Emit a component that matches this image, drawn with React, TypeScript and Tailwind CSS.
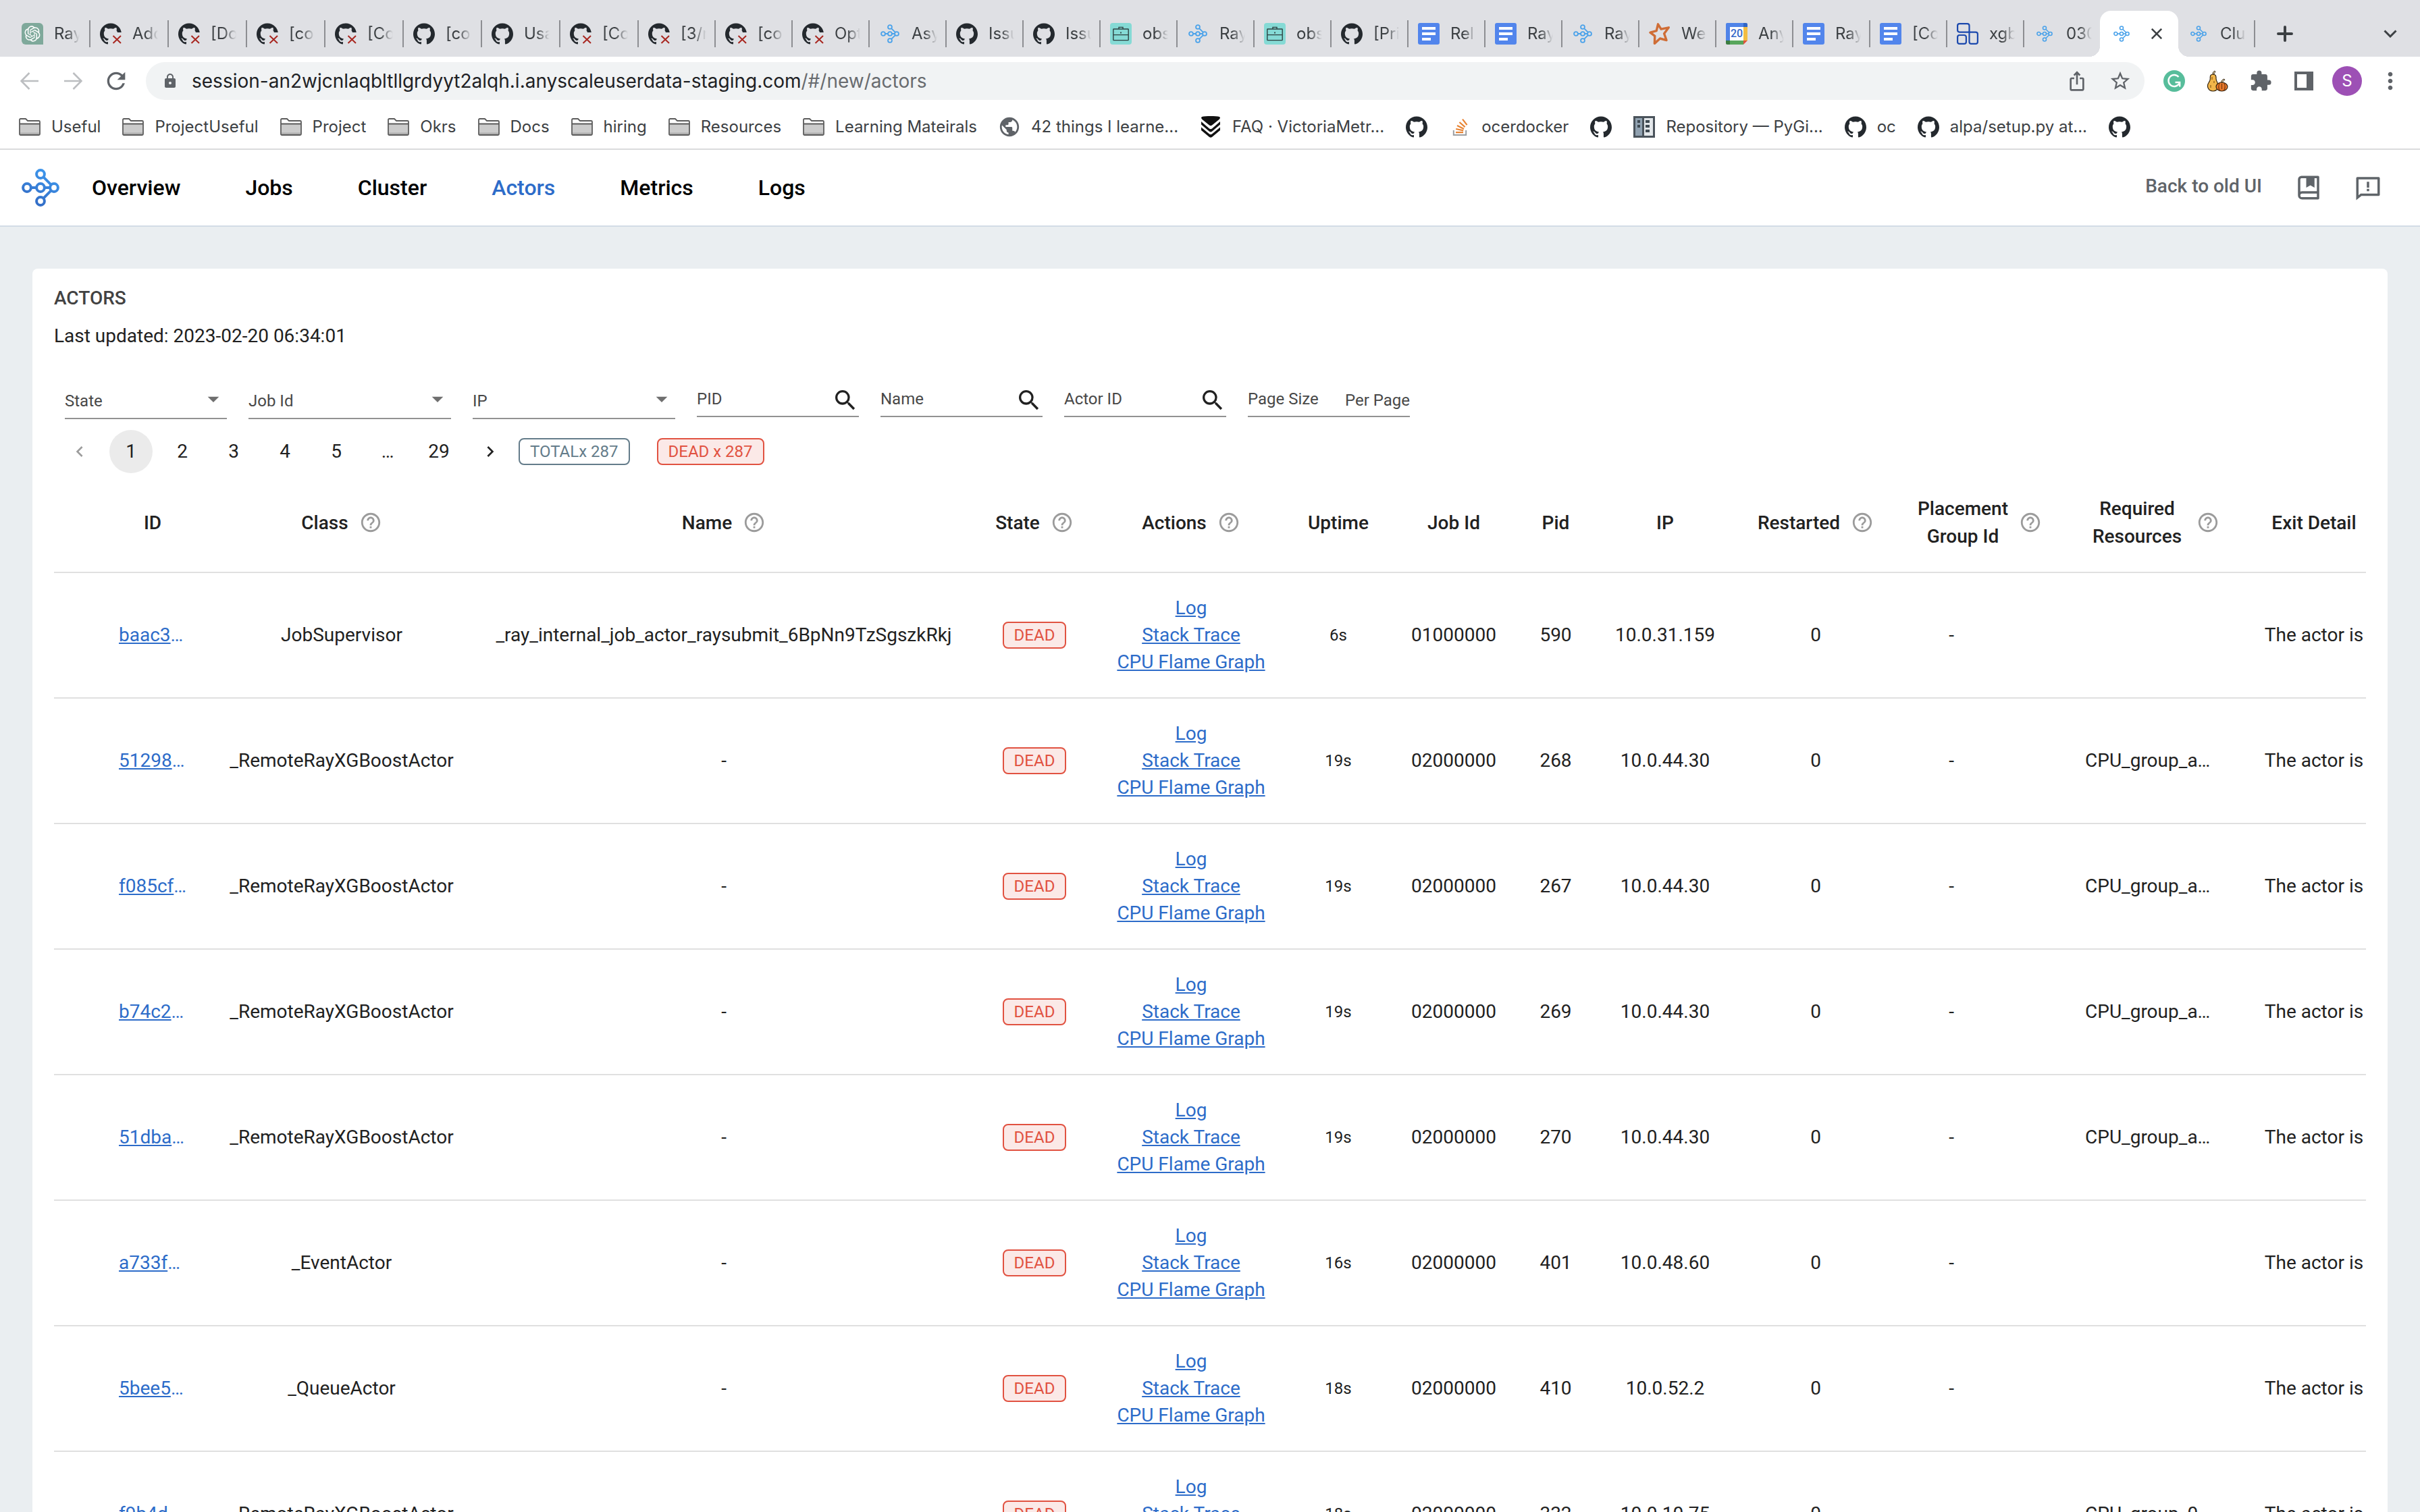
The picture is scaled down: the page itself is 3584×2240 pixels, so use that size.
import type { ReactNode } from "react";
import {
  MdArrowDropDown,
  MdExtension,
  MdHelpOutline,
  MdIosShare,
  MdLock,
  MdMoreVert,
  MdNavigateBefore,
  MdNavigateNext,
  MdPublic,
  MdRefresh,
  MdSearch,
  MdStarBorder,
} from "react-icons/md";
import { RiFeedbackLine, RiOpenaiFill } from "react-icons/ri";

/* ---------- Icons ---------- */

const GITHUB_PATH =
  "M12 .297c-6.63 0-12 5.373-12 12 0 5.303 3.438 9.8 8.205 11.385.6.113.82-.258.82-.577 0-.285-.01-1.04-.015-2.04-3.338.724-4.042-1.61-4.042-1.61C4.422 18.07 3.633 17.7 3.633 17.7c-1.087-.744.084-.729.084-.729 1.205.084 1.838 1.236 1.838 1.236 1.07 1.835 2.809 1.305 3.495.998.108-.776.417-1.305.76-1.605-2.665-.3-5.466-1.332-5.466-5.93 0-1.31.465-2.38 1.235-3.22-.135-.303-.54-1.523.105-3.176 0 0 1.005-.322 3.3 1.23.96-.267 1.98-.399 3-.405 1.02.006 2.04.138 3 .405 2.28-1.552 3.285-1.23 3.285-1.23.645 1.653.24 2.873.12 3.176.765.84 1.23 1.91 1.23 3.22 0 4.61-2.805 5.625-5.475 5.92.42.36.81 1.096.81 2.22 0 1.606-.015 2.896-.015 3.286 0 .315.21.69.825.57C20.565 22.092 24 17.592 24 12.297c0-6.627-5.373-12-12-12";

function GithubIcon() {
  return (
    <svg viewBox="0 0 24 24" className="size-8 shrink-0" fill="#24292e" aria-hidden="true">
      <path d={GITHUB_PATH} />
    </svg>
  );
}

function GithubFailIcon() {
  return (
    <svg viewBox="0 0 32 32" className="size-8 shrink-0" aria-hidden="true">
      <clipPath id="gh-cut">
        <path d="M0 0H32V14H13V32H0Z" />
      </clipPath>
      <g clipPath="url(#gh-cut)">
        <path d={GITHUB_PATH} transform="scale(1.3333)" fill="#24292e" />
      </g>
      <path d="M19.5 19 31 30M31 19 19.5 30" stroke="#a8261f" strokeWidth="2" fill="none" />
    </svg>
  );
}

function RayGlyph({ className, stroke, width }: { className: string; stroke: string; width: number }) {
  return (
    <svg viewBox="0 0 56 56" className={className} fill="none" aria-hidden="true">
      <defs>
        <linearGradient id="ray-grad" gradientUnits="userSpaceOnUse" x1="40" y1="8" x2="20" y2="48">
          <stop offset="0" stopColor="#3d94ea" />
          <stop offset="1" stopColor="#336fc8" />
        </linearGradient>
      </defs>
      <g stroke={stroke} strokeWidth={width}>
        <circle cx="28" cy="8" r="5.9" />
        <circle cx="8" cy="28" r="5.9" />
        <circle cx="28" cy="28" r="5.9" />
        <circle cx="48" cy="28" r="5.9" />
        <circle cx="28" cy="48" r="5.9" />
        <path d="M13.9 28.01H22.1M33.9 28.01H42.1M32.2 12.2 43.8 23.8M32.2 43.8 43.8 32.2" />
      </g>
    </svg>
  );
}

function RayFavicon() {
  return (
    <span className="flex size-8 shrink-0 items-center justify-center">
      <RayGlyph className="size-7" stroke="#4aa2ea" width={3.6} />
    </span>
  );
}

function RaySmallFavicon() {
  return (
    <span className="flex size-8 shrink-0 items-center justify-center">
      <RayGlyph className="size-6" stroke="#4aa2ea" width={3.6} />
    </span>
  );
}

function OpenAiIcon() {
  return (
    <span className="flex size-8 shrink-0 items-center justify-center rounded-l-md rounded-tr-md bg-[#7fa99b] text-white">
      <RiOpenaiFill size={28} />
    </span>
  );
}

function BriefcaseIcon() {
  return (
    <svg viewBox="0 0 32 32" className="size-8 shrink-0" fill="none" aria-hidden="true">
      <rect width="32" height="32" rx="4" fill="#85dad5" />
      <g stroke="#2e4242" strokeWidth="1.4">
        <rect x="4.8" y="9" width="22.4" height="16.6" rx="0.6" />
        <path d="M13 9V6.4H19V9M5 17.6H27" />
        <path d="M16 13.6V15.4" strokeWidth="1.8" />
      </g>
    </svg>
  );
}

function DocsIcon() {
  return (
    <svg viewBox="0 0 32 32" className="size-8 shrink-0" aria-hidden="true">
      <rect width="32" height="32" rx="3" fill="#5285ec" />
      <path d="M6 6H26V10H6ZM6 14H26V18H6ZM6 22H19V26H6Z" fill="#fff" />
    </svg>
  );
}

function StarFavicon() {
  return (
    <svg viewBox="0 0 32 32" className="size-8 shrink-0" fill="none" aria-hidden="true">
      <path
        d="M13.5 1.8 18 9.2 29.3 6.8 22.6 15.8 26 25.6 16.5 23 8.4 30.4 8.8 19.4 2 14.2 11.2 11.6Z"
        stroke="#cf6d36"
        strokeWidth="3.4"
        strokeLinejoin="round"
      />
    </svg>
  );
}

function CalendarIcon() {
  return (
    <span className="relative flex size-8 shrink-0 items-center justify-center">
      <svg viewBox="0 0 32 32" className="absolute inset-0 size-8" aria-hidden="true">
        <path d="M2 0H26V6H6V26H0V2Q0 0 2 0Z" fill="#4f83e8" />
        <path d="M26 0H30Q32 0 32 2V6H26Z" fill="#2f65c6" />
        <path d="M26 6H32V26H26Z" fill="#f3bd42" />
        <path d="M6 26H26V32H6Z" fill="#58a65c" />
        <path d="M0 26H6V32H2Q0 32 0 30Z" fill="#3b7d41" />
        <path d="M26 26H32L26 32Z" fill="#e0533f" />
        <path d="M6 6H26V26H6Z" fill="#fff" />
      </svg>
      <span className="relative font-['Roboto',sans-serif] text-[16px] leading-none font-medium text-[#3568c9]">20</span>
    </span>
  );
}

function BlocksIcon() {
  return (
    <svg viewBox="0 0 32 32" className="size-8 shrink-0" fill="none" aria-hidden="true">
      <g stroke="#1c49ad" strokeWidth="2.2">
        <path d="M4.1 1.1H15.5Q18.5 1.1 18.5 4.1V13.6H4.1Q1.1 13.6 1.1 10.6V4.1Q1.1 1.1 4.1 1.1Z" />
        <rect x="1.1" y="18" width="12.8" height="12.9" rx="3" />
        <path d="M18.5 13.6H27.9Q30.9 13.6 30.9 16.6V27.9Q30.9 30.9 27.9 30.9H21.5Q18.5 30.9 18.5 27.9Z" />
      </g>
    </svg>
  );
}

function FolderIcon() {
  return (
    <svg viewBox="0 0 32 32" className="size-8 shrink-0" aria-hidden="true">
      <path d="M1 27V6Q1 4 3 4H10L13 7H29Q31 7 31 9V27Q31 28 30 28H2Q1 28 1 27Z" fill="#fff" />
      <path d="M2 12H30V27H2Z" fill="#cccccc" />
      <path d="M2 24.5H30V27H2Z" fill="#b0b0b0" />
      <path
        d="M1 26.5V5.5Q1 4 2.5 4H10L13 7H29.5Q31 7 31 8.5V26.5Q31 28 29.5 28H2.5Q1 28 1 26.5ZM1 11.5H31"
        fill="none"
        stroke="#5b5b5b"
        strokeWidth="1.8"
      />
    </svg>
  );
}

function GlobeIcon() {
  return (
    <span className="flex size-8 shrink-0 items-center justify-center text-[#5f6368]">
      <MdPublic size={34} className="shrink-0" />
    </span>
  );
}

function ChevronStackIcon() {
  return (
    <svg viewBox="0 0 32 32" className="size-8 shrink-0" fill="#111111" aria-hidden="true">
      <path d="M3 1C8 -.3 24 -.3 29 1C30.4 2 30 3.500 28.500 5L18 13.600Q16 15 14 13.600L3.500 5C2 3.500 1.600 2 3 1Z" />
      <path d="M2 8 14 18.600Q16 20 18 18.600L30 8V12.600L18 22.800Q16 24.200 14 22.800L2 12.600Z" />
      <path d="M2 16.500 14 26.600Q16 28 18 26.600L30 16.500V21L18 31Q16 32.500 14 31L2 21Z" />
    </svg>
  );
}

function StackOverflowIcon() {
  return (
    <svg viewBox="0 0 32 32" className="size-8 shrink-0" fill="none" aria-hidden="true">
      <path d="M6.800 21V28H25.200V21" stroke="#9b9fa3" strokeWidth="2" />
      <g stroke="#e88434" strokeWidth="2.200">
        <path d="M10 24.200H21M10.200 19 21.200 21.400M12 14 22 19M15.400 9 23.600 16.200M20 4.600 26.600 13.200" />
      </g>
    </svg>
  );
}

function BuildingIcon() {
  return (
    <svg viewBox="0 0 32 32" className="size-8 shrink-0" aria-hidden="true">
      <rect width="32" height="32" fill="#4a535b" />
      <rect x="3" y="3" width="10" height="26" fill="#90a1b0" />
      <rect x="16" y="3" width="13" height="26" fill="#e3e7ea" />
      <path d="M6 6H10V10H6ZM6 13H10V17H6ZM18 6H24V10H18ZM18 13H24V17H18ZM18 20H24V24H18Z" fill="#3f4a52" />
    </svg>
  );
}

function GrammarlyIcon() {
  return (
    <svg viewBox="0 0 32 32" className="size-8" fill="none" aria-hidden="true">
      <circle cx="16" cy="16" r="16" fill="#57bd9b" />
      <path d="M22.5 10A8.5 8.5 0 1 0 23.5 19.5" stroke="#fff" strokeWidth="2.4" />
      <path d="M17.5 18H24.2V24.5" stroke="#fff" strokeWidth="2.4" />
    </svg>
  );
}

function GourdIcon() {
  return (
    <svg viewBox="0 0 32 32" className="size-8" aria-hidden="true">
      <path
        d="M9.5 6C6 6 5 8.5 5.3 12C5.6 15 4.5 16 3 18.5C-.5 24 2.5 31 9.5 31C16.5 31 18.5 24 16 18.5C14.5 16 13.8 14.5 14 12C14.2 8.5 13 6 9.5 6Z"
        fill="#f2b64a"
        stroke="#33230f"
        strokeWidth="1.2"
      />
      <path d="M9 6C9 3.5 10 2 12 1L13 2.5C11.5 3.5 11 4.5 11 6Z" fill="#e7d7b0" stroke="#33230f" strokeWidth="1" />
      <path d="M8 10V14M11 16V19M6 22V26" stroke="#8a5a18" strokeWidth="1.2" />
      <ellipse cx="22.5" cy="24.5" rx="8.5" ry="6.5" fill="#e8792b" stroke="#33230f" strokeWidth="1.2" />
      <path
        d="M19.5 18.5C17.5 22 17.5 27 19.5 30.5M25.5 18.5C27.5 22 27.5 27 25.5 30.5M22.5 20V28"
        stroke="#7a3a10"
        strokeWidth="1.2"
        fill="none"
      />
      <path d="M21.5 18C21.5 16 23 14 26 13L26.8 14.5C24.5 15.5 23.8 16.5 23.8 18Z" fill="#e7d7b0" stroke="#33230f" strokeWidth="1" />
    </svg>
  );
}

function SidePanelIcon() {
  return (
    <svg viewBox="0 0 28 28" className="size-7" aria-hidden="true">
      <path d="M0 0H28V28H0ZM4 4V24H18V4Z" fill="#5f6368" fillRule="evenodd" />
    </svg>
  );
}

function ArrowIcon({ flip }: { flip?: boolean }) {
  return (
    <svg viewBox="0 0 28 28" className="size-7" fill="none" stroke="#bcbec1" strokeWidth="2.6" aria-hidden="true">
      <path d={flip ? "M1 14H26M14.5 2 26.5 14 14.5 26" : "M27 14H2M13.5 2 1.5 14 13.5 26"} />
    </svg>
  );
}

function BookIcon() {
  return (
    <svg viewBox="0 0 24 24" className="size-[42px]" fill="currentColor" aria-hidden="true">
      <path d="M20 22H6.5A3.5 3.5 0 0 1 3 18.5V5a3 3 0 0 1 3-3h14a1 1 0 0 1 1 1v18a1 1 0 0 1-1 1zm-1-2v-3H6.5a1.5 1.5 0 0 0 0 3H19zM10 4H6a1 1 0 0 0-1 1v10.337A3.486 3.486 0 0 1 6.5 15H19V4h-2v8l-3.5-2-3.5 2V4z" />
    </svg>
  );
}

/* ---------- Browser chrome ---------- */

type Tab = { icon: () => ReactNode; title: string };

const wideTabs: Tab[] = [
  { icon: OpenAiIcon, title: "Ray" },
  { icon: GithubFailIcon, title: "Add" },
  { icon: GithubFailIcon, title: "[Do" },
  { icon: GithubFailIcon, title: "[co" },
  { icon: GithubFailIcon, title: "[Co" },
  { icon: GithubIcon, title: "[co" },
  { icon: GithubIcon, title: "Usa" },
  { icon: GithubFailIcon, title: "[Co" },
];

const narrowTabs: Tab[] = [
  { icon: GithubFailIcon, title: "[3/r" },
  { icon: GithubFailIcon, title: "[co" },
  { icon: GithubFailIcon, title: "Opt" },
  { icon: RayFavicon, title: "Asy" },
  { icon: GithubIcon, title: "Issu" },
  { icon: GithubIcon, title: "Issu" },
  { icon: BriefcaseIcon, title: "obs" },
  { icon: RayFavicon, title: "Ray" },
  { icon: BriefcaseIcon, title: "obs" },
  { icon: GithubIcon, title: "[Pri" },
  { icon: DocsIcon, title: "Rel" },
  { icon: DocsIcon, title: "Ray" },
  { icon: RayFavicon, title: "Ray" },
  { icon: StarFavicon, title: "We" },
  { icon: CalendarIcon, title: "Any" },
  { icon: DocsIcon, title: "Ray" },
  { icon: DocsIcon, title: "[Co" },
  { icon: BlocksIcon, title: "xgb" },
];

function TabButton({ tab, className }: { tab: Tab; className: string }) {
  const Icon = tab.icon;
  return (
    <button
      type="button"
      className={`flex h-10 items-center gap-4 border-r-2 pl-3.5 text-left text-[24px] leading-8 text-[#3c4043] ${className}`}
    >
      <Icon />
      <span className="w-[38px] shrink-0 overflow-hidden whitespace-nowrap [mask-image:linear-gradient(to_right,#000_50%,transparent)]">
        {tab.title}
      </span>
    </button>
  );
}

function TabStrip() {
  return (
    <div className="flex h-[84px] items-end bg-[#dfe0e4] pl-[18px]">
      <div className="flex h-[68px] items-center">
        {wideTabs.map((t, i) => (
          <TabButton key={i} tab={t} className="w-[116px] border-[#8d8e92]" />
        ))}
        {narrowTabs.map((t, i) => (
          <TabButton key={i} tab={t} className="w-[114px] border-[#8d8e92]" />
        ))}
        <TabButton tab={{ icon: RaySmallFavicon, title: "030" }} className="w-[112px] border-transparent" />
        <div className="relative flex h-[68px] w-[116px] items-center justify-between rounded-t-2xl bg-white px-4">
          <span className="absolute bottom-0 -left-4 size-4 bg-[radial-gradient(circle_at_0_0,transparent_16px,#fff_16px)]" />
          <span className="absolute -right-4 bottom-0 size-4 bg-[radial-gradient(circle_at_100%_0,transparent_16px,#fff_16px)]" />
          <RaySmallFavicon />
          <button type="button" aria-label="Close tab" className="flex size-8 items-center justify-center">
            <svg viewBox="0 0 16 16" className="size-4" stroke="#3c4043" strokeWidth="2.6" aria-hidden="true">
              <path d="M.8.8 15.2 15.2M15.2.8.8 15.2" />
            </svg>
          </button>
        </div>
        <TabButton tab={{ icon: RaySmallFavicon, title: "Clu" }} className="w-[114px] border-[#8d8e92]" />
        <button type="button" aria-label="New tab" className="ml-4 flex size-14 items-center justify-center">
          <svg viewBox="0 0 24 24" className="size-6" stroke="#3c4043" strokeWidth="4" strokeLinecap="round" aria-hidden="true">
            <path d="M2 12H22M12 2V22" />
          </svg>
        </button>
      </div>
      <button type="button" aria-label="Search tabs" className="ml-auto flex h-[68px] w-[88px] items-center justify-center">
        <svg viewBox="0 0 20 12" className="h-3 w-5" fill="none" stroke="#3c4043" strokeWidth="3" aria-hidden="true">
          <path d="M1.5 1.5 10 10 18.5 1.5" />
        </svg>
      </button>
    </div>
  );
}

function ToolButton({ label, children }: { label: string; children: ReactNode }) {
  return (
    <button type="button" aria-label={label} className="flex h-14 w-16 items-center justify-center text-[#5f6368]">
      {children}
    </button>
  );
}

function Toolbar() {
  return (
    <div className="flex h-[72px] items-center gap-3 px-3">
      <div className="flex">
        <ToolButton label="Back">
          <ArrowIcon />
        </ToolButton>
        <ToolButton label="Forward">
          <ArrowIcon flip />
        </ToolButton>
        <ToolButton label="Reload">
          <MdRefresh size={40} />
        </ToolButton>
      </div>
      <div className="flex h-14 flex-1 items-center rounded-full bg-[#f1f3f4] pr-1 pl-6">
        <MdLock size={24} className="shrink-0 text-[#5f6368]" />
        <p className="ml-5 flex-1 text-[28px] leading-10 whitespace-nowrap text-[#202124]">
          session-an2wjcnlaqbltllgrdyyt2alqh.i.anyscaleuserdata-staging.com
          <span className="text-[#686b6f]">/#/new/actors</span>
        </p>
        <ToolButton label="Share">
          <MdIosShare size={32} />
        </ToolButton>
        <ToolButton label="Bookmark this tab">
          <MdStarBorder size={34} />
        </ToolButton>
      </div>
      <div className="flex">
        <ToolButton label="Grammarly">
          <GrammarlyIcon />
        </ToolButton>
        <ToolButton label="Gourd extension">
          <GourdIcon />
        </ToolButton>
        <ToolButton label="Extensions">
          <MdExtension size={34} />
        </ToolButton>
        <ToolButton label="Side panel">
          <SidePanelIcon />
        </ToolButton>
        <ToolButton label="Profile">
          <span className="flex size-11 items-center justify-center rounded-full bg-[#9d50b5] text-[24px] leading-none text-white">
            S
          </span>
        </ToolButton>
        <ToolButton label="Menu">
          <MdMoreVert size={40} />
        </ToolButton>
      </div>
    </div>
  );
}

const bookmarks: Tab[] = [
  { icon: FolderIcon, title: "Useful" },
  { icon: FolderIcon, title: "ProjectUseful" },
  { icon: FolderIcon, title: "Project" },
  { icon: FolderIcon, title: "Okrs" },
  { icon: FolderIcon, title: "Docs" },
  { icon: FolderIcon, title: "hiring" },
  { icon: FolderIcon, title: "Resources" },
  { icon: FolderIcon, title: "Learning Mateirals" },
  { icon: GlobeIcon, title: "42 things I learne..." },
  { icon: ChevronStackIcon, title: "FAQ · VictoriaMetr..." },
  { icon: GithubIcon, title: "" },
  { icon: StackOverflowIcon, title: "ocerdocker" },
  { icon: GithubIcon, title: "" },
  { icon: BuildingIcon, title: "Repository — PyGi..." },
  { icon: GithubIcon, title: "oc" },
  { icon: GithubIcon, title: "alpa/setup.py at..." },
  { icon: GithubIcon, title: "" },
];

function BookmarksBar() {
  return (
    <nav aria-label="Bookmarks" className="flex h-[66px] items-center gap-8 border-b-2 border-[#dadbdc] px-7">
      {bookmarks.map((b, i) => {
        const Icon = b.icon;
        return (
          <a
            key={i}
            href="#bookmark"
            aria-label={b.title || "GitHub"}
            className="flex shrink-0 items-center gap-4 text-[24px] leading-8 whitespace-nowrap text-[#3c4043]"
          >
            <Icon />
            {b.title && <span>{b.title}</span>}
          </a>
        );
      })}
    </nav>
  );
}

/* ---------- Dashboard ---------- */

const navItems = ["Overview", "Jobs", "Cluster", "Actors", "Metrics", "Logs"];

function Header() {
  return (
    <header className="flex h-[114px] shrink-0 items-center border-b-2 border-[#d2dce6] bg-white pr-[56px] pl-8">
      <a href="#home" aria-label="Ray">
        <RayGlyph className="size-14" stroke="url(#ray-grad)" width={4} />
      </a>
      <nav className="ml-12 flex gap-24 text-[32px] leading-10 font-medium">
        {navItems.map((item) => (
          <a key={item} href={`#${item}`} className={item === "Actors" ? "text-[#2d6cc9]" : "text-black"}>
            {item}
          </a>
        ))}
      </nav>
      <div className="ml-auto flex items-center text-[#5f6469]">
        <button type="button" className="mr-12 pb-1 text-[28px] leading-10 font-medium">
          Back to old UI
        </button>
        <a href="#docs" aria-label="Documentation" className="mr-[46px]">
          <BookIcon />
        </a>
        <a href="#feedback" aria-label="Feedback">
          <RiFeedbackLine size={42} />
        </a>
      </div>
    </header>
  );
}

function FilterSelect({ label, className }: { label: string; className: string }) {
  return (
    <div className={`relative flex h-[60px] items-center border-b-2 border-[#929292] pt-2 ${className}`}>
      <select aria-label={label} className="w-full appearance-none bg-transparent p-0 text-[24px] leading-8 text-[#484848]">
        <option>{label}</option>
      </select>
      <MdArrowDropDown size={40} className="pointer-events-none absolute right-0 bottom-2 text-[#6f6f6f]" />
    </div>
  );
}

function FilterInput({ label, adornment }: { label: string; adornment: ReactNode }) {
  return (
    <div className="flex h-[57px] w-60 items-center border-b-2 border-[#929292] pt-1">
      <input
        aria-label={label}
        placeholder={label}
        className="w-full min-w-0 flex-1 bg-transparent p-0 text-[24px] leading-8 placeholder:text-[#484848] placeholder:opacity-100"
      />
      {adornment}
    </div>
  );
}

function SearchButton({ label }: { label: string }) {
  return (
    <button type="button" aria-label={`Search ${label}`} className="pt-1 text-[#212121]">
      <MdSearch size={40} />
    </button>
  );
}

function Filters() {
  return (
    <form className="mt-[43px] flex items-start gap-8 px-4">
      <FilterSelect label="State" className="w-60" />
      <FilterSelect label="Job Id" className="w-[300px]" />
      <FilterSelect label="IP" className="w-[300px]" />
      {["PID", "Name", "Actor ID"].map((l) => (
        <FilterInput key={l} label={l} adornment={<SearchButton label={l} />} />
      ))}
      <FilterInput
        label="Page Size"
        adornment={<span className="shrink-0 pt-1 text-[24px] leading-8 text-[#484848]">Per Page</span>}
      />
    </form>
  );
}

const pages = ["1", "2", "3", "4", "5", "…", "29"];

function Pagination() {
  return (
    <div className="mt-4 flex items-center">
      <nav aria-label="Pages" className="flex gap-3 px-1.5 text-[28px] leading-10 text-[#212121]">
        <button type="button" aria-label="Previous page" className="flex size-16 items-center justify-center text-[#9c9c9c]">
          <MdNavigateBefore size={32} />
        </button>
        {pages.map((p) => (
          <button
            key={p}
            type="button"
            className={`flex size-16 items-center justify-center rounded-full ${p === "1" ? "bg-[#ebebeb]" : ""}`}
          >
            {p}
          </button>
        ))}
        <button type="button" aria-label="Next page" className="flex size-16 items-center justify-center">
          <MdNavigateNext size={32} />
        </button>
      </nav>
      <div className="ml-1 flex gap-10">
        <span className="rounded-lg border-2 border-[#647c8a] px-[15px] text-[24px] leading-9 text-[#647c8a]">TOTALx 287</span>
        <DeadChip>DEAD x 287</DeadChip>
      </div>
    </div>
  );
}

function DeadChip({ children }: { children: ReactNode }) {
  return (
    <span className="inline-block rounded-lg border-2 border-[#e15241] bg-[#fbe9e7] px-[15px] text-[24px] leading-9 text-[#e15241]">
      {children}
    </span>
  );
}

type Column = { label: string; width: string; labelClass?: string; help?: boolean };

const columns: Column[] = [
  { label: "", width: "w-[64px]" },
  { label: "ID", width: "w-[164px]" },
  { label: "Class", width: "w-[396px]", help: true },
  { label: "Name", width: "w-[736px]", help: true },
  { label: "State", width: "w-[184px]", help: true },
  { label: "Actions", width: "w-[280px]", help: true },
  { label: "Uptime", width: "w-[156px]" },
  { label: "Job Id", width: "w-[186px]" },
  { label: "Pid", width: "w-[116px]" },
  { label: "IP", width: "w-[208px]" },
  { label: "Restarted", width: "w-[238px]", help: true },
  { label: "Placement Group\u00a0Id", width: "w-[248px]", labelClass: "w-min", help: true },
  { label: "Required Resources", width: "w-[268px]", labelClass: "w-[144px]", help: true },
  { label: "Exit Detail", width: "w-[206px]" },
];

type Actor = {
  id: string;
  cls: string;
  name: string;
  uptime: string;
  job: string;
  pid: string;
  ip: string;
  resources: string;
};

const actors: Actor[] = [
  { id: "baac3", cls: "JobSupervisor", name: "_ray_internal_job_actor_raysubmit_6BpNn9TzSgszkRkj", uptime: "6s", job: "01000000", pid: "590", ip: "10.0.31.159", resources: "" },
  { id: "51298", cls: "_RemoteRayXGBoostActor", name: "-", uptime: "19s", job: "02000000", pid: "268", ip: "10.0.44.30", resources: "CPU_group_a…" },
  { id: "f085cf", cls: "_RemoteRayXGBoostActor", name: "-", uptime: "19s", job: "02000000", pid: "267", ip: "10.0.44.30", resources: "CPU_group_a…" },
  { id: "b74c2", cls: "_RemoteRayXGBoostActor", name: "-", uptime: "19s", job: "02000000", pid: "269", ip: "10.0.44.30", resources: "CPU_group_a…" },
  { id: "51dba", cls: "_RemoteRayXGBoostActor", name: "-", uptime: "19s", job: "02000000", pid: "270", ip: "10.0.44.30", resources: "CPU_group_a…" },
  { id: "a733f", cls: "_EventActor", name: "-", uptime: "16s", job: "02000000", pid: "401", ip: "10.0.48.60", resources: "" },
  { id: "5bee5", cls: "_QueueActor", name: "-", uptime: "18s", job: "02000000", pid: "410", ip: "10.0.52.2", resources: "" },
  { id: "f9b4d", cls: "_RemoteRayXGBoostActor", name: "-", uptime: "18s", job: "02000000", pid: "332", ip: "10.0.10.75", resources: "CPU_group_0…" },
];

function ActorTable() {
  return (
    <div className="overflow-hidden">
      <table className="w-full table-fixed border-collapse text-center text-[28px] leading-10 text-[#212121]">
        <thead>
          <tr className="h-[147px] border-b-2 border-[#e0e0e0]">
            {columns.map((c) => (
              <th key={c.label} scope="col" className={`px-2 leading-[41px] font-medium ${c.width}`}>
                <div className="flex items-center justify-center gap-4">
                  <span className={c.labelClass ?? "whitespace-nowrap"}>{c.label}</span>
                  {c.help && <MdHelpOutline size={34} className="shrink-0 text-[#9b9b9b]" />}
                </div>
              </th>
            ))}
          </tr>
        </thead>
        <tbody>
          {actors.map((a) => (
            <tr key={a.id} className="h-[186px] border-b-2 border-[#e0e0e0]">
              <td />
              <td className="pl-8 text-left whitespace-nowrap">
                <a href="#actor" className="text-[#2d6cc9]">
                  <span className="underline">{a.id}</span>…
                </a>
              </td>
              <td>{a.cls}</td>
              <td>{a.name}</td>
              <td>
                <div className="flex justify-center">
                  <DeadChip>DEAD</DeadChip>
                </div>
              </td>
              <td>
                <div className="flex flex-col items-center text-[#2d6cc9]">
                  <a href="#log" className="underline">Log</a>
                  <a href="#stack" className="underline">Stack Trace</a>
                  <a href="#flame" className="underline">CPU Flame Graph</a>
                </div>
              </td>
              <td className="text-[24px]">{a.uptime}</td>
              <td>{a.job}</td>
              <td>{a.pid}</td>
              <td>{a.ip}</td>
              <td>0</td>
              <td className="px-8">
                <div className="w-[100px]">-</div>
              </td>
              <td className="px-8 text-left whitespace-nowrap">{a.resources}</td>
              <td className="whitespace-nowrap">The actor is</td>
            </tr>
          ))}
        </tbody>
      </table>
    </div>
  );
}

export default function App() {
  return (
    <div className="flex h-screen flex-col overflow-hidden bg-white font-['Inter',sans-serif]">
      <TabStrip />
      <Toolbar />
      <BookmarksBar />
      <div className="flex min-h-0 flex-1 flex-col overflow-hidden bg-[#eaeef1] font-['Roboto',sans-serif]">
        <Header />
        <main className="mx-12 mt-[62px] rounded-t-lg bg-white px-8 pt-6">
          <h1 className="text-[28px] leading-10 font-medium text-[#424242]">ACTORS</h1>
          <p className="mt-4 text-[28px] leading-10 text-[#212121]">Last updated: 2023-02-20 06:34:01</p>
          <Filters />
          <Pagination />
          <ActorTable />
        </main>
      </div>
    </div>
  );
}
